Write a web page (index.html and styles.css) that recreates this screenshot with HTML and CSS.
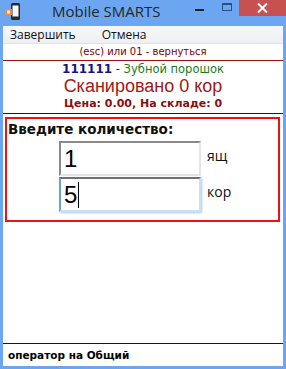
FILE: index.html
```html
<!DOCTYPE html>
<html>
	<head>
		<meta charset="UTF-8">
		<title>Mobile SMARTS</title>
		<link rel="stylesheet" href="styles.css">
	</head>
	<body>
		<!--окно-->
		<div class="window">
			<!--заголовок-->
			<div class="titlebar">
				<svg class="app-icon" width="18" height="20" viewBox="0 0 18 20">
					<rect x="7" y="1" width="9" height="17" rx="1.5" fill="#2a2a2a"/>
					<rect x="8.5" y="3.5" width="6" height="11" fill="#f4f6f8"/>
					<rect x="1" y="7" width="7" height="6" fill="#f08a3c"/>
					<rect x="3" y="8.5" width="3" height="3" fill="#fff3e0"/>
				</svg>
				<div class="title">Mobile SMARTS</div>
				<div class="btn-min"><span></span></div>
				<div class="btn-max"><span></span></div>
				<div class="btn-close">
					<svg width="11" height="10" viewBox="0 0 11 10">
						<path d="M1 0.5 L10 9.5 M10 0.5 L1 9.5" stroke="#fff" stroke-width="2"/>
					</svg>
				</div>
			</div>

			<div class="client">
				<!--меню-->
				<ul class="menu">
					<li>Завершить</li>
					<li>Отмена</li>
				</ul>

				<div class="hint">(esc) или 01 - вернуться</div>

				<div class="info">
					<div class="product"><b class="code">111111</b> <span class="dash">-</span> <span class="name">Зубной порошок</span></div>
					<div class="scanned">Сканировано 0 кор</div>
					<div class="price">Цена: 0.00, На складе: 0</div>
				</div>

				<!--ввод количества-->
				<div class="qty-box">
					<div class="qty-label">Введите количество:</div>
					<div class="qty-row">
						<div class="field">1</div>
						<span class="unit">ящ</span>
					</div>
					<div class="qty-row">
						<div class="field focused">5<i class="caret"></i></div>
						<span class="unit">кор</span>
					</div>
				</div>

				<div class="spacer"></div>

				<div class="status">оператор на Общий</div>
			</div>
		</div>
	</body>
</html>
```

FILE: styles.css
```css
* {
	padding: 0px;
	margin: 0px;
}

ul {
	list-style: none;
}

body {
	width: 286px;
	height: 369px;
	overflow: hidden;
	font-family: "DejaVu Sans", "Liberation Sans", sans-serif;
}

.window {
	width: 286px;
	height: 369px;
	background-color: #6ca6f0;
	display: flex;
	flex-direction: column;
}

/*заголовок*/
.titlebar {
	height: 26px;
	display: flex;
	align-items: flex-start;
}

.app-icon {
	margin: 2px 0 0 4px;
}

.title {
	flex: 1;
	font-family: "Open Sans", "Noto Sans", sans-serif;
	font-size: 15px;
	color: #262626;
	line-height: 20px;
	margin: 1px 0 0 30px;
}

.btn-min {
	width: 9px;
	height: 11px;
	display: flex;
	align-items: flex-end;
}

.btn-min span {
	display: block;
	width: 9px;
	height: 2px;
	background-color: #222;
}

.btn-max {
	margin: 3px 0 0 18px;
}

.btn-max span {
	display: block;
	width: 8px;
	height: 5px;
	border: 1px solid #2a4f80;
	border-top-width: 2px;
}

.btn-close {
	margin-left: 7px;
	width: 47px;
	height: 16px;
	background-color: #c75050;
	display: flex;
	align-items: center;
	justify-content: center;
}

/*клиентская часть*/
.client {
	flex: 1;
	margin: 0 3px 3px;
	background-color: #fff;
	display: flex;
	flex-direction: column;
}

.menu {
	height: 17px;
	display: flex;
	gap: 26px;
	padding-left: 7px;
	background-image: linear-gradient(to bottom, #f7f8f9, #edeff2);
	border-bottom: 1px solid #dfe2e6;
	font-family: "Open Sans", "Noto Sans", sans-serif;
	font-size: 12px;
	line-height: 18px;
	color: #111;
}

.hint {
	height: 16px;
	line-height: 16px;
	text-align: center;
	font-size: 10px;
	color: #800000;
	border-bottom: 1px solid #9b1010;
}

.info {
	height: 51px;
	padding-top: 1px;
	text-align: center;
	border-bottom: 1px solid #14145a;
}

.product {
	height: 15px;
	line-height: 15px;
	font-size: 11.5px;
}

.code {
	color: #15157a;
	font-size: 12px;
}

.dash {
	color: #333;
}

.name {
	color: #1c7a1c;
}

.scanned {
	height: 19px;
	line-height: 19px;
	font-family: "Liberation Sans", sans-serif;
	font-size: 18px;
	color: #a01818;
}

.price {
	height: 15px;
	line-height: 15px;
	font-size: 11px;
	font-weight: bold;
	color: #8b0f0f;
}

/*рамка ввода*/
.qty-box {
	margin: 3px 0 0 2px;
	width: 271px;
	height: 101px;
	border: 2px solid #ee1111;
}

.qty-label {
	height: 22px;
	line-height: 20px;
	padding-left: 1px;
	font-size: 13.5px;
	font-weight: bold;
	color: #111;
}

.qty-row {
	height: 36px;
	display: flex;
	align-items: flex-start;
	padding-left: 52px;
}

.field {
	width: 135px;
	height: 31px;
	border: 2px solid #8a8a8a;
	border-right-color: #e4e4e4;
	border-bottom-color: #e4e4e4;
	font-family: "Liberation Sans", sans-serif;
	font-size: 24px;
	line-height: 31px;
	padding-left: 3px;
	color: #000;
	display: flex;
	align-items: center;
}

.field.focused {
	border-color: #707070 #c9dff3 #c9dff3 #6fa0d3;
	box-shadow: 1px 1px 2px #a8c8ea;
}

.caret {
	display: block;
	width: 1px;
	height: 26px;
	background-color: #000;
	margin-left: 1px;
}

.unit {
	margin: 5px 0 0 6px;
	font-family: "Open Sans", "Noto Sans", sans-serif;
	font-size: 14px;
	color: #111;
}

.spacer {
	flex: 1;
}

.status {
	height: 22px;
	line-height: 22px;
	border-top: 1px solid #14143c;
	padding-left: 5px;
	font-size: 10.5px;
	font-weight: bold;
	color: #000;
}
```
